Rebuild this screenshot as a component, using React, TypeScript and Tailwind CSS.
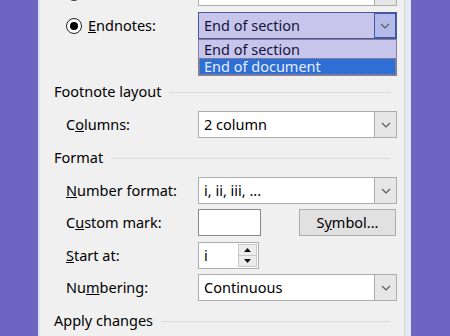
// Footnote and Endnote dialog — cropped view with the Endnotes dropdown open

const font = { fontFamily: '"Noto Sans", "Open Sans", sans-serif' };

function Chevron() {
  return (
    <svg width="10" height="6" viewBox="0 0 10 6" className="block">
      <path d="M1 1 L5 5 L9 1" fill="none" stroke="#5a5a5a" strokeWidth="1.2" />
    </svg>
  );
}

// plain combo box (white field + gray drop button)
function Combo({ value, active = false }: { value: string; active?: boolean }) {
  if (active) {
    return (
      <div className="flex h-full w-[199px] border border-[#4f5596] bg-[#c8c5ec]">
        <span className="flex-1 truncate pl-[5px] leading-[25px] text-[#14143a]">{value}</span>
        <div className="flex w-[22px] items-center justify-center border border-[#3c5ba6] bg-[#b4bbea]">
          <Chevron />
        </div>
      </div>
    );
  }
  return (
    <div className="flex h-full w-[199px] border border-[#adadad] bg-white">
      <span className="flex-1 truncate pl-[5px] leading-[25px] text-black">{value}</span>
      <div className="flex w-[22px] items-center justify-center border-l border-[#adadad] bg-[#e6e6e6]">
        <Chevron />
      </div>
    </div>
  );
}

function Header({ text }: { text: string }) {
  return (
    <div className="flex h-[20px] items-center gap-[8px] pl-[14px] pr-[13px]">
      <span className="text-black">{text}</span>
      <div className="h-px flex-1 bg-[#dcdcdc]" />
    </div>
  );
}

function Row({
  children,
  control,
  mt,
}: {
  children: React.ReactNode;
  control: React.ReactNode;
  mt: string;
}) {
  return (
    <div className={`flex h-[27px] items-center ${mt}`}>
      <div className="w-[158px] shrink-0 pl-[26px] text-black">{children}</div>
      <div className="flex h-full flex-1 items-stretch">{control}</div>
    </div>
  );
}

export default function App() {
  return (
    <div className="h-[336px] w-[450px] overflow-hidden bg-[#6e65c2] text-[14.5px]" style={font}>
      <div className="relative ml-[38px] flex h-full w-[373px] border-l-2 border-r-[6px] border-l-[#d9e5f2] border-r-[#e2eaf4] bg-[#f0f0f0]">
        <div className="relative flex-1 border-r border-[#d4d4d4]">
          {/* top row is cut off by the crop */}
          <Row mt="-mt-[21px]" control={<Combo value="Below text" />}>
            <span className="flex items-center gap-[6px]">
              <span className="flex h-[16px] w-[16px] items-center justify-center rounded-full border-[1.5px] border-[#333] bg-white" />
              <span><u>F</u>ootnotes:</span>
            </span>
          </Row>

          <Row mt="mt-[6px]" control={<Combo value="End of section" active />}>
            <span className="flex items-center gap-[6px]">
              <span className="flex h-[16px] w-[16px] items-center justify-center rounded-full border-[1.5px] border-[#222] bg-white">
                <span className="h-[8px] w-[8px] rounded-full bg-black" />
              </span>
              <span><u>E</u>ndnotes:</span>
            </span>
          </Row>

          <div className="mt-[43px]">
            <Header text="Footnote layout" />
          </div>

          <Row mt="mt-[9px]" control={<Combo value="2 column" />}>
            C<u>o</u>lumns:
          </Row>

          <div className="mt-[10px]">
            <Header text="Format" />
          </div>

          <Row mt="mt-[9px]" control={<Combo value="i, ii, iii, ..." />}>
            <u>N</u>umber format:
          </Row>

          <Row
            mt="mt-[5px]"
            control={
              <div className="flex w-[198px] items-stretch justify-between">
                <div className="w-[63px] border border-[#8a8a8a] bg-white" />
                <button className="w-[97px] border border-[#adadad] bg-[#e1e1e1] text-black">
                  S<u>y</u>mbol...
                </button>
              </div>
            }
          >
            C<u>u</u>stom mark:
          </Row>

          <Row
            mt="mt-[6px]"
            control={
              <div className="flex w-[61px] border border-[#adadad] bg-white">
                <span className="flex-1 pl-[5px] leading-[24px]">i</span>
                <div className="my-[1px] mr-[1px] flex w-[19px] flex-col border border-[#c8c8c8]">
                  <div className="flex flex-1 items-center justify-center border-b border-[#c8c8c8] bg-[#ececec]">
                    <svg width="7" height="4" viewBox="0 0 7 4"><path d="M0 4 L3.5 0 L7 4 Z" fill="#111" /></svg>
                  </div>
                  <div className="flex flex-1 items-center justify-center bg-[#ececec]">
                    <svg width="7" height="4" viewBox="0 0 7 4"><path d="M0 0 L3.5 4 L7 0 Z" fill="#111" /></svg>
                  </div>
                </div>
              </div>
            }
          >
            <u>S</u>tart at:
          </Row>

          <Row mt="mt-[5px]" control={<Combo value="Continuous" />}>
            Nu<u>m</u>bering:
          </Row>

          <div className="mt-[10px]">
            <Header text="Apply changes" />
          </div>

          {/* open dropdown list */}
          <div className="absolute left-[158px] top-[39px] w-[199px] border border-[#7f7f9a] bg-[#c8c5ec]">
            <div className="h-[18px] pl-[5px] leading-[18px] text-[#14143a]">End of section</div>
            <div className="h-[17px] border border-dotted border-[#d08a5a] bg-[#2d6fd4] pl-[4px] leading-[15px] text-[#e6ecff]">
              End of document
            </div>
          </div>
        </div>
      </div>
    </div>
  );
}
